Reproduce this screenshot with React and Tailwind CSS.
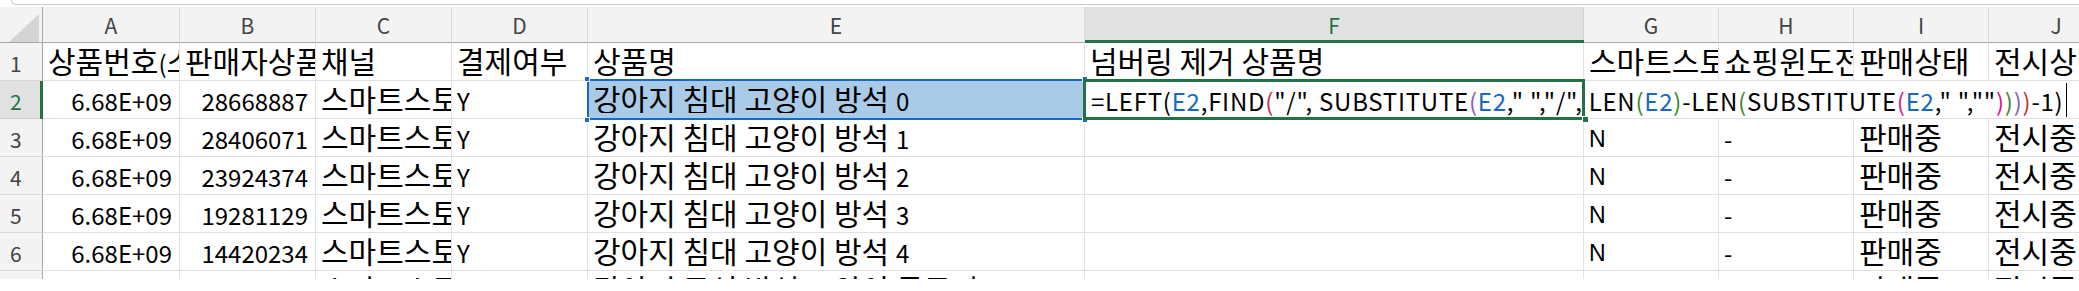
import React from "react";

const HANGUL = /([\u3131-\uD7A3][\u3131-\uD7A3 ]*)/;
const isHangul = (s) => /^[\u3131-\uD7A3]/.test(s);

function T({ s }) {
  const parts = s.split(HANGUL).filter((p) => p !== "");
  return (
    <>
      {parts.map((p, i) =>
        isHangul(p) ? (
          <span key={i} className="text-[30px]">
            {p}
          </span>
        ) : (
          <span key={i}>{p}</span>
        )
      )}
    </>
  );
}

const COLS =
  "grid grid-cols-[43px_137px_136px_136px_136px_497px_499px_135px_135px_135px_135px]";

function RowHead({ n, active }) {
  return (
    <div
      className={
        "relative flex items-end pl-[10px] pb-[6px] text-[21px] leading-none border-b border-r " +
        (active
          ? "bg-[#e1e1e1] text-[#217346] border-b-[#d0d0d0] border-r-[#a8a8a8]"
          : "bg-[#f3f3f3] text-[#444444] border-b-[#d8d8d8] border-r-[#a8a8a8]")
      }
    >
      {n}
      {active && (
        <div className="absolute right-[-1px] top-0 bottom-[-1px] w-[3px] bg-[#217346]" />
      )}
    </div>
  );
}

function Cell({ children, right, className = "" }) {
  return (
    <div
      className={
        "flex items-end overflow-hidden whitespace-nowrap leading-none border-r border-b border-[#e1e1e1] pb-[5px] " +
        (right ? "justify-end pr-[7px] " : "pl-[5px] ") +
        className
      }
    >
      <span className="leading-none">{children}</span>
    </div>
  );
}

function ColHead({ l, active }) {
  return (
    <div
      className={
        "relative flex items-end justify-center pb-[6px] text-[21px] leading-none border-r border-b " +
        (active
          ? "bg-[#e1e1e1] text-[#217346] border-r-[#d0d0d0] border-b-[#a8a8a8]"
          : "bg-[#f3f3f3] text-[#444444] border-r-[#d8d8d8] border-b-[#a8a8a8]")
      }
    >
      {l}
      {active && (
        <div className="absolute left-0 right-[-1px] bottom-[-1px] h-[3px] bg-[#217346]" />
      )}
    </div>
  );
}

const rows = [
  { n: 3, a: "6.68E+09", b: "28406071", e: "강아지 침대 고양이 방석 1" },
  { n: 4, a: "6.68E+09", b: "23924374", e: "강아지 침대 고양이 방석 2" },
  { n: 5, a: "6.68E+09", b: "19281129", e: "강아지 침대 고양이 방석 3" },
  { n: 6, a: "6.68E+09", b: "14420234", e: "강아지 침대 고양이 방석 4" },
  { n: 7, a: "6.68E+09", b: "12345678", e: "강아지 쿠션 방석 고양이 목도리 5" },
];

const K = "text-black";
const BL = "text-[#1769c4]";
const L2 = "text-[#c8323c]";
const L3 = "text-[#8e5cc4]";
const L4 = "text-[#3b8a2e]";
const L5 = "text-[#d6198a]";

const formula = [
  ["=LEFT(", K],
  ["E2", BL],
  [",FIND", K],
  ["(", L2],
  ['"/", SUBSTITUTE', K],
  ["(", L3],
  ["E2", BL],
  ['," ","/", LEN', K],
  ["(", L4],
  ["E2", BL],
  [")", L4],
  ["-LEN", K],
  ["(", L4],
  ["SUBSTITUTE", K],
  ["(", L5],
  ["E2", BL],
  ['," ",""', K],
  [")", L5],
  [")", L4],
  [")", L3],
  [")", L2],
  ["-1)", K],
];

function Handle({ className }) {
  return (
    <div
      className={
        "absolute w-[6px] h-[6px] bg-[#1769c4] border border-white " + className
      }
    />
  );
}

export default function App() {
  return (
    <div className="w-[2079px] h-[291px] bg-white overflow-hidden font-['Noto_Sans_CJK_KR',sans-serif] text-[24px] text-black">
      <div className="h-[7px] pl-[11px]">
        <div className="h-[5px] border-l border-b border-[#c8c8c8] rounded-bl-[8px]" />
      </div>
      <div className="h-[272px] overflow-hidden">
        {/* column headers */}
        <div className={COLS + " h-[36px]"}>
          <div className="relative bg-[#f3f3f3] border-r border-b border-r-[#a8a8a8] border-b-[#a8a8a8]">
            <svg
              className="absolute left-[9px] top-[7px]"
              width="30"
              height="28"
              viewBox="0 0 30 28"
            >
              <polygon points="30,0 30,28 0,28" fill="#d4d4d4" />
            </svg>
          </div>
          {["A", "B", "C", "D", "E", "F", "G", "H", "I", "J"].map((l) => (
            <ColHead key={l} l={l} active={l === "F"} />
          ))}
        </div>

        {/* row 1 */}
        <div className={COLS + " h-[38px]"}>
          <RowHead n={1} />
          <Cell><T s="상품번호(스마트스토어)" /></Cell>
          <Cell><T s="판매자상품코드" /></Cell>
          <Cell><T s="채널" /></Cell>
          <Cell><T s="결제여부" /></Cell>
          <Cell><T s="상품명" /></Cell>
          <Cell><T s="넘버링 제거 상품명" /></Cell>
          <Cell><T s="스마트스토어전시" /></Cell>
          <Cell><T s="쇼핑윈도전시" /></Cell>
          <Cell><T s="판매상태" /></Cell>
          <Cell><T s="전시상태" /></Cell>
        </div>

        {/* row 2 */}
        <div className="grid grid-cols-[43px_137px_136px_136px_136px_497px_1039px] h-[38px]">
          <RowHead n={2} active />
          <Cell right>6.68E+09</Cell>
          <Cell right>28668887</Cell>
          <Cell><T s="스마트스토어" /></Cell>
          <Cell>Y</Cell>
          <div className="relative flex items-end whitespace-nowrap border-r border-b border-[#e1e1e1] bg-[#a9cbe8] pl-[5px] pb-[5px]">
            <span className="leading-none overflow-hidden">
              <T s="강아지 침대 고양이 방석 0" />
            </span>
            <div className="absolute left-[-1px] top-[-2px] right-[-1px] bottom-[-2px] border-2 border-[#1769c4]" />
            <Handle className="left-[-4px] top-[-5px]" />
            <Handle className="right-[-4px] top-[-5px]" />
            <Handle className="left-[-4px] bottom-[-5px]" />
            <Handle className="right-[-4px] bottom-[-5px]" />
          </div>
          <div className="relative flex items-end whitespace-nowrap border-b border-[#e1e1e1] pl-[6px] pb-[5px] bg-white">
            <span className="leading-none tracking-[0.75px]">
              {formula.map(([t, c], i) => (
                <span key={i} className={c}>
                  {t}
                </span>
              ))}
            </span>
            <div className="w-[1px] h-[34px] bg-black mb-[-4px] ml-[3px]" />
            <div className="absolute left-[-2px] top-[-2px] w-[502px] bottom-[-2px] border-[3px] border-[#217346]" />
            <div className="absolute left-[497px] bottom-[-5px] w-[7px] h-[7px] bg-[#217346] border border-white" />
          </div>
        </div>

        {rows.map((r) => (
          <div key={r.n} className={COLS + " h-[38px]"}>
            <RowHead n={r.n} />
            <Cell right>{r.a}</Cell>
            <Cell right>{r.b}</Cell>
            <Cell><T s="스마트스토어" /></Cell>
            <Cell>Y</Cell>
            <Cell><T s={r.e} /></Cell>
            <Cell> </Cell>
            <Cell className="font-['Liberation_Sans',sans-serif] text-[23px]">N</Cell>
            <Cell>-</Cell>
            <Cell><T s="판매중" /></Cell>
            <Cell><T s="전시중" /></Cell>
          </div>
        ))}
      </div>
    </div>
  );
}
